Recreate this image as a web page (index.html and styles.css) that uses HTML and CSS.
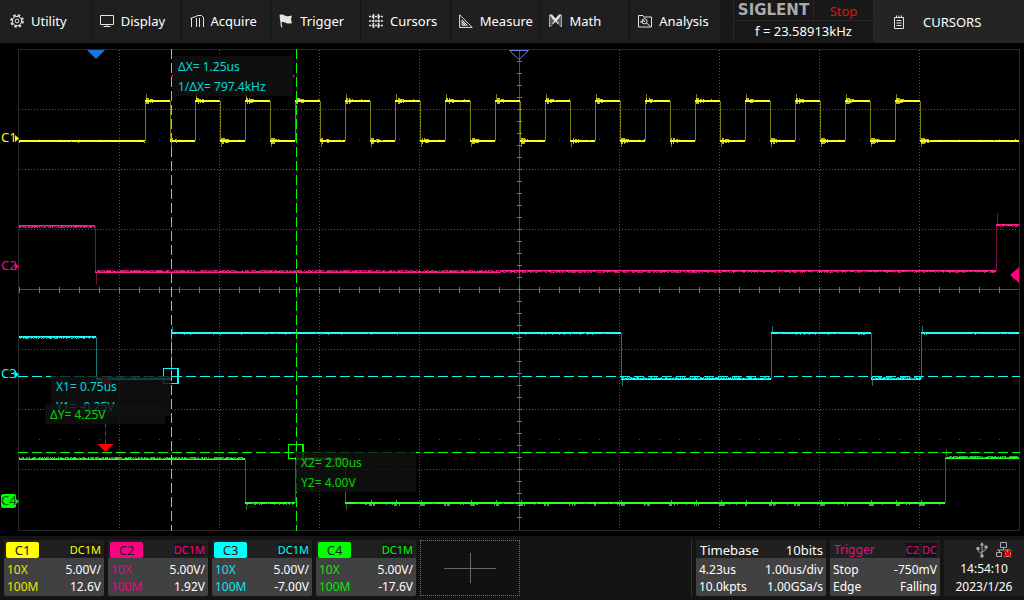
FILE: index.html
```html
<!DOCTYPE html>
<html lang="en">
<head>
<meta charset="utf-8">
<title>Oscilloscope</title>
<link rel="stylesheet" href="styles.css">
</head>
<body>
<div class="scope">
  <header class="topbar">
    <nav class="menu">
      <button class="menu-item" type="button">
        <svg class="icon" viewBox="0 0 14 14"><circle cx="7" cy="7" r="5.800" stroke-width="2" stroke-dasharray="2.500 2.055"/><circle cx="7" cy="7" r="4.600"/><circle cx="7" cy="7" r="1.900"/></svg>
        Utility</button>
      <button class="menu-item" type="button">
        <svg class="icon" viewBox="0 0 14 14"><path d="M.5 1.500h13v9h-13zM7 10v2M3.500 12.500h7"/></svg>
        Display</button>
      <button class="menu-item" type="button">
        <svg class="icon" viewBox="0 0 14 14"><path d="M1.500 13V4M6.500 13V4M9.500 13V4M13.500 13V3M.5 4.500L8 1.500L11.500 1.500L13.500 3.500"/></svg>
        Acquire</button>
      <button class="menu-item" type="button">
        <svg class="icon" viewBox="0 0 14 14"><path class="solid" d="M.5 1l1-.5C4 .2 5 1 7 2c2 .5 4 0 6-.6l-1 4 1 3.600c-2 .8-4 .8-6 0-2-1-3-1-4.500-.8l.8 5H2z"/></svg>
        Trigger</button>
      <button class="menu-item" type="button">
        <svg class="icon" viewBox="0 0 14 14"><path stroke-dasharray="2.300 .7" d="M0 2.500h14M0 7h14M0 11.500h14M4.500 0v14M9.500 0v14" stroke-width="1.600"/></svg>
        Cursors</button>
      <button class="menu-item" type="button">
        <svg class="icon" viewBox="0 0 14 14"><path d="M.6 .8v12.600h12.600zM3 6v5.200h5.200zM3 8l3 3M5 8v3"/></svg>
        Measure</button>
      <button class="menu-item" type="button">
        <svg class="icon" viewBox="0 0 14 14"><path d="M.8 1v12M12.200 1v12"/><path class="solid" d="M.5 .5h2.500l3.500 4 3.500-4h2.500L8 7l2 2.500H8.500L6.500 7.500l-2 2H3L5 7z"/><path d="M1 12.500L6.500 7.500l5.500 5M3 3v7M10 3v7" opacity=".6"/></svg>
        Math</button>
      <button class="menu-item" type="button">
        <svg class="icon" viewBox="0 0 14 14"><path d="M.5 13V1.500h4.500l1 1.500h7.500v10zM8.500 9l3.500 3"/><circle cx="6.500" cy="7.300" r="2.600"/><path d="M2 8h2.500l1-2L7 8"/></svg>
        Analysis</button>
    </nav>
    <section class="status">
      <span class="brand">SIGLENT</span>
      <span class="run-state">Stop</span>
      <span class="frequency">f = 23.58913kHz</span>
    </section>
    <button class="panel-title" type="button">
      <svg class="icon" viewBox="0 0 12 14"><path d="M1.500 2.500h9v11h-9zM3.500 5.500h5M3.500 8h5M3.500 10.500h5M3.500 .5v2M6 .5v2M8.500 .5v2"/></svg>
      CURSORS</button>
  </header>

  <main class="display">
    <svg class="plot" viewBox="0 44 1024 492" role="img" aria-label="Waveforms">
      <g class="grid" id="grid"></g>
      <g class="traces" id="traces"></g>

      <path class="blue" d="M87 50h18l-9 9z"/>
      <path class="trigger-position" d="M509.500 50.500h19l-9.500 9z"/>
      <path class="magenta" d="M1010 275l9-8v16z"/>

      <g class="cursor cursor-a">
        <path d="M171.500 49V531M18 376.500H1020"/>
        <path class="handle" d="M178 368.500h-14.500v15H178"/>
        <path class="handle thick" d="M178 368v16"/>
      </g>
      <g class="cursor cursor-b">
        <path d="M296.500 49V531M18 452.500H1020"/>
        <path class="handle" d="M303 444.500h-14.500v14H303"/>
        <path class="handle thick" d="M303 444v15"/>
      </g>

      <path class="red-line" d="M105.500 383v62"/>
      <path class="red" d="M97.500 444h16l-8 8zM98 384h15l-7.500-8zM171 76l2-2v4zM295 76l-2-2v4z"/>

      <g class="readout cyan">
        <rect x="173" y="56" width="120" height="40"/>
        <text x="178" y="71">ΔX= 1.25us</text>
        <text x="178" y="91">1/ΔX= 797.4kHz</text>
      </g>
      <g class="readout cyan">
        <rect x="51" y="376" width="120" height="40"/>
        <text x="56" y="391">X1= 0.75us</text>
        <text x="56" y="411">Y1= -0.25V</text>
      </g>
      <g class="readout green">
        <rect x="45" y="404" width="120" height="20"/>
        <text x="50" y="419">ΔY= 4.25V</text>
      </g>
      <g class="readout green">
        <rect x="296" y="452" width="120" height="40"/>
        <text x="301" y="467">X2= 2.00us</text>
        <text x="301" y="487">Y2= 4.00V</text>
      </g>

      <g class="channel-mark yellow"><text x="1" y="142">C1</text><path d="M15 135l4 3.500-4 3.500z"/></g>
      <g class="channel-mark magenta"><text x="1" y="270">C2</text><path d="M15 263l4 3.500-4 3.500z"/></g>
      <g class="channel-mark cyan"><text x="1" y="378">C3</text><path d="M15 371l4 3.500-4 3.500z"/></g>
      <g class="channel-mark green"><rect x="1" y="494" width="15" height="14" rx="2"/><path d="M15 498l4 3.500-4 3.500z"/><text class="on-fill" x="1" y="505">C4</text></g>
    </svg>
  </main>

  <footer class="bottombar">
    <button class="card channel ch1" type="button">
      <span class="card-head"><span class="tab">C1</span><span class="coupling">DC1M</span></span>
      <span class="row"><span class="tint">10X</span><span>5.00V/</span></span>
      <span class="row"><span class="tint">100M</span><span>12.6V</span></span>
    </button>
    <button class="card channel ch2" type="button">
      <span class="card-head"><span class="tab">C2</span><span class="coupling">DC1M</span></span>
      <span class="row"><span class="tint">10X</span><span>5.00V/</span></span>
      <span class="row"><span class="tint">100M</span><span>1.92V</span></span>
    </button>
    <button class="card channel ch3" type="button">
      <span class="card-head"><span class="tab">C3</span><span class="coupling">DC1M</span></span>
      <span class="row"><span class="tint">10X</span><span>5.00V/</span></span>
      <span class="row"><span class="tint">100M</span><span>-7.00V</span></span>
    </button>
    <button class="card channel ch4" type="button">
      <span class="card-head"><span class="tab">C4</span><span class="coupling">DC1M</span></span>
      <span class="row"><span class="tint">10X</span><span>5.00V/</span></span>
      <span class="row"><span class="tint">100M</span><span>-17.6V</span></span>
    </button>
    <button class="add" type="button" aria-label="Add trace">
      <svg class="plus" viewBox="0 0 52 30"><path d="M0 15.500h52M26.500 0v30"/></svg>
    </button>
    <div class="right-group">
      <button class="card timebase" type="button">
        <span class="card-head"><span>Timebase</span><span>10bits</span></span>
        <span class="row"><span>4.23us</span><span>1.00us/div</span></span>
        <span class="row"><span>10.0kpts</span><span>1.00GSa/s</span></span>
      </button>
      <button class="card trigger" type="button">
        <span class="card-head"><span>Trigger</span><span class="badges"><span class="badge">C2</span><span class="badge">DC</span></span></span>
        <span class="row"><span>Stop</span><span>-750mV</span></span>
        <span class="row"><span>Edge</span><span>Falling</span></span>
      </button>
      <section class="clock">
        <span class="ports">
          <svg class="port usb" viewBox="0 0 12 16"><path d="M6 3v11M6 11.500C3 10.500 2 9.500 2 6.500M6 9.500c3-.5 4-1.500 4-4"/><path class="solid" d="M6 0l2 3.500H4zM.5 5h3v3h-3zM8.500 3.500h3v3h-3z"/><circle class="solid" cx="6" cy="14" r="1.700"/></svg>
          <svg class="port lan" viewBox="0 0 16 16"><path d="M4.500 .5h6v5h-6zM.5 10.500h5v4h-5zM9.500 10.500h5v4h-5zM7.500 5.500v2.500M1 8h13M3.500 8v2.500M11.500 8v2.500"/><path class="offline" d="M7.500 8l8 7.500M15.500 8l-8 7.500"/></svg>
        </span>
        <span>14:54:10</span>
        <span>2023/1/26</span>
      </section>
    </div>
  </footer>
</div>
<script src="plot.js"></script>
</body>
</html>
```
FILE: styles.css
```css
* {
  box-sizing: border-box;
}

body {
  margin: 0;
  background: #000;
  color: #fff;
  font: 13px/18px "Noto Sans", "Open Sans", sans-serif;
}

button {
  margin: 0;
  padding: 0;
  border: 0;
  background: none;
  color: inherit;
  font: inherit;
  text-align: left;
}

.scope {
  display: flex;
  flex-direction: column;
  min-height: 100vh;
}

/* Top bar */
.topbar {
  display: grid;
  grid-template-columns: 733fr 141fr 150fr;
  height: 44px;
  background: #181818;
  border-bottom: 1px solid #000;
}

.menu {
  display: flex;
  margin-right: 13px;
  padding-left: 2px;
  background: #1f1f1f;
}

.menu-item {
  display: flex;
  flex: 1;
  align-items: center;
  gap: 7px;
  padding: 0 0 2px 8px;
  border-right: 1px solid #141414;
}

.menu-item:last-child {
  border-right-color: transparent;
}

.icon {
  flex: none;
  width: 14px;
  height: 14px;
  fill: none;
  stroke: #e4e4e4;
}

.solid {
  fill: #e4e4e4;
  stroke: none;
}

.status {
  display: grid;
  grid-template-columns: 79px 1fr;
  grid-template-rows: 20px 20px;
  gap: 1px;
  height: 41px;
  border: solid #282828;
  border-width: 0 1px 1px;
  background: #282828;
  text-align: center;
}

.status > span {
  background: #181818;
}

.brand {
  color: #aaa;
  font: bold 15px/20px "DejaVu Sans", sans-serif;
}

.run-state {
  color: #e01010;
  line-height: 22px;
}

.frequency {
  grid-column: 1 / 3;
  line-height: 20px;
}

.panel-title {
  display: flex;
  align-items: center;
  gap: 17px;
  padding-left: 18px;
  background: #242424;
}

/* Waveform display */
.display {
  flex: 1;
}

.plot {
  display: block;
  width: 100%;
  height: auto;
}

.grid,
.traces,
.cursor,
.red-line {
  fill: none;
  shape-rendering: crispEdges;
}

.frame {
  stroke: #282828;
}

.dots {
  stroke: #555;
  stroke-dasharray: 1 2;
}

.minor-dots {
  stroke: #444;
  stroke-dasharray: 1 19;
}

.axis {
  stroke: #4c4c4c;
}

.ticks {
  stroke: #777;
}

.line {
  stroke-width: 2;
}

.edge {
  opacity: .48;
}

.noise {
  opacity: .75;
}

.gaps {
  stroke: #000;
  opacity: .45;
}

.trace-1 { stroke: #ffff20; }
.trace-2 { stroke: #ff2090; }
.trace-3 { stroke: #20ffff; }
.trace-4 { stroke: #30ff30; }

.cursor path {
  stroke-dasharray: 10 4;
}

.cursor .handle {
  stroke-dasharray: none;
}

.cursor .thick {
  stroke-width: 2;
}

.cursor-a { stroke: #00ffff; }
.cursor-b { stroke: #00ff00; }

.yellow { fill: #ffff00; }
.magenta { fill: #ff0084; }
.cyan { fill: #00ffff; }
.green { fill: #00ff00; }
.red { fill: #ff0000; }
.blue { fill: #1a76e2; }

.red-line {
  stroke: #ff0000;
  stroke-dasharray: 5 3;
}

.trigger-position {
  fill: none;
  stroke: #7878e8;
}

.readout rect {
  fill: #121212;
  opacity: .8;
}

.readout text {
  font-size: 12px;
  opacity: .82;
}

.channel-mark text {
  font-size: 13px;
}

.channel-mark .on-fill {
  fill: #005500;
}

/* Bottom bar */
.bottombar {
  display: flex;
  gap: 4px;
  height: 64px;
  padding: 4px 0 4px 4px;
  background: #141414;
}

.card {
  display: flex;
  flex-direction: column;
  border-radius: 2px;
  background: #414141;
  overflow: hidden;
}

.channel,
.add {
  flex: 0 1 100px;
}

.card-head {
  display: flex;
  align-items: center;
  justify-content: space-between;
  height: 18px;
  margin-bottom: 3px;
  padding: 2px 3px 0;
  background: #202020;
}

.row {
  display: flex;
  justify-content: space-between;
  padding: 0 3px;
  line-height: 17px;
}

.channel {
  font-size: 12px;
}

.channel .card-head {
  padding-left: 2px;
}

.tab {
  width: 33px;
  height: 16px;
  border-radius: 2px;
  background: currentColor;
  font-size: 13px;
  line-height: 16px;
  text-align: center;
}

.tab::first-line {
  color: #202020;
}

.coupling {
  background: #181818;
  font-size: 11px;
  line-height: 14px;
}

.ch1 .tab, .ch1 .coupling, .ch1 .tint { color: #ffff00; }
.ch2 .tab, .ch2 .coupling, .ch2 .tint { color: #ff0084; }
.ch3 .tab, .ch3 .coupling, .ch3 .tint { color: #00ffff; }
.ch4 .tab, .ch4 .coupling, .ch4 .tint { color: #00ff00; }

.channel .tint {
  opacity: .88;
}

.add {
  display: flex;
  align-items: center;
  justify-content: center;
  border: 1px dotted #707070;
  background: #111;
}

.plus {
  width: 52px;
  height: 30px;
  fill: none;
  stroke: #666;
}

.right-group {
  display: flex;
  gap: 4px;
  margin-left: auto;
  padding-left: 4px;
  border-left: 1px solid #333;
  font-size: 12px;
}

.timebase {
  width: 130px;
}

.trigger {
  width: 110px;
}

.timebase .card-head {
  padding-left: 4px;
  font-size: 13px;
}

.trigger .card-head {
  padding-left: 4px;
  color: #e80c7c;
}

.badges {
  display: flex;
  gap: 3px;
}

.badge {
  background: #121212;
  font-size: 11px;
  line-height: 14px;
}

.clock {
  display: flex;
  flex-direction: column;
  width: 80px;
  background: #202020;
  text-align: center;
}

.ports {
  display: flex;
  justify-content: flex-end;
  gap: 8px;
  height: 20px;
  padding: 2px 12px 0 0;
}

.port {
  height: 16px;
  fill: none;
  stroke: #aaa;
}

.port .solid {
  fill: #aaa;
}

.usb {
  width: 12px;
}

.lan {
  width: 16px;
}

.port .offline {
  stroke: #ff0000;
  stroke-width: 2;
}
```
FILE: plot.js
```js
const NS = "http://www.w3.org/2000/svg";
const grid = document.getElementById("grid");
const traces = document.getElementById("traces");

function addPath(parent, className, d) {
  const path = document.createElementNS(NS, "path");
  path.setAttribute("class", className);
  path.setAttribute("d", d);
  parent.appendChild(path);
}

// Graticule: ten divisions across, eight down
let dots = "";
for (let x = 119; x < 1019; x += 100) if (x !== 519) dots += `M${x}.5 50V530`;
for (let y = 109; y < 529; y += 60) if (y !== 289) dots += `M19 ${y}.5H1018`;
addPath(grid, "dots", dots);
addPath(grid, "minor-dots", "M39 139.5H1018M39 439.5H1018");
addPath(grid, "axis", "M19 289.5H1019M519.5 50V530");
let ticks = "";
for (let x = 19; x < 1019; x += 20) ticks += `M${x}.5 287v6`;
for (let y = 61; y < 529; y += 12) ticks += `M517 ${y}.5h5`;
addPath(grid, "ticks", ticks);
addPath(grid, "frame", "M18.5 49.5H1019.5V530.5H18.5Z");

// Repeatable noise
let seed = 7;
function random() {
  seed = (seed * 16807) % 2147483647;
  return seed / 2147483647;
}

// levels: [x start, x end, y, noise density, noise side (-1 above, 1 below)]
function drawTrace(name, levels, overshoot) {
  let line = "", edge = "", noise = "", gaps = "";
  levels.forEach(([x1, x2, y, density, side], i) => {
    line += `M${x1} ${y}H${x2}`;
    for (let x = x1; x < x2; x++) {
      if (random() < density) noise += side < 0 ? `M${x}.5 ${y - 2}v1` : `M${x}.5 ${y + 1}v1`;
      if (random() < density * .8) gaps += side < 0 ? `M${x}.5 ${y - 1}v1` : `M${x}.5 ${y}v1`;
    }
    const before = levels[i - 1];
    if (!before || Math.abs(y - before[2]) < 5) return;
    const rising = y < before[2];
    edge += `M${x1}.5 ${before[2]}V${y}`;
    const over = rising ? overshoot[0] : overshoot[1];
    edge += `M${x1 + 1}.5 ${y}v${rising ? -over : over}`;
    if (name === "trace-1") {
      for (let k = 1; k < 9; k++) {
        const size = k < 5 ? 3 : 2;
        if (random() < .85) noise += `M${x1 + k}.5 ${y - size}v${size + (random() < .7 ? size : 1)}`;
      }
    }
  });
  addPath(traces, `line ${name}`, line);
  addPath(traces, `edge ${name}`, edge);
  addPath(traces, `noise ${name}`, noise);
  addPath(traces, "gaps", gaps);
}

const clock = [[19, 145, 141, .01, 1]];
for (let x = 145; x < 920; x += 50) {
  clock.push([x, x + 25, 101, .03, -1]);
  clock.push([x + 25, x + 50 > 920 ? 1019 : x + 50, 141, .02, -1]);
}
drawTrace("trace-1", clock, [7, 6]);

drawTrace("trace-2", [
  [19, 95, 226, .65, 1],
  [95, 500, 272, .65, -1],
  [500, 700, 271, .6, 1],
  [700, 996, 271, .35, 1],
  [996, 1019, 225, .4, 1]
], [12, 12]);

drawTrace("trace-3", [
  [19, 96, 337, .4, 1],
  [96, 171, 379, .5, -1],
  [171, 621, 333, .06, 1],
  [621, 771, 379, .4, -1],
  [771, 871, 333, .08, 1],
  [871, 921, 379, .55, -1],
  [921, 1019, 333, .06, 1]
], [7, 7]);

drawTrace("trace-4", [
  [19, 245, 459, .6, -1],
  [245, 295, 503, .25, 1],
  [295, 345, 459, .5, -1],
  [345, 945, 503, .03, 1],
  [945, 1019, 458, .65, -1]
], [9, 7]);

// Crosstalk bursts on the channel 4 low level
let bursts = "";
for (let x = 371; x < 940; x += 25) {
  for (let k = -2; k < 4; k++) {
    if (random() < .7) bursts += `M${x + k}.5 ${k === 0 ? 500 : 502}V506`;
  }
}
addPath(traces, "noise trace-4", bursts);
```
